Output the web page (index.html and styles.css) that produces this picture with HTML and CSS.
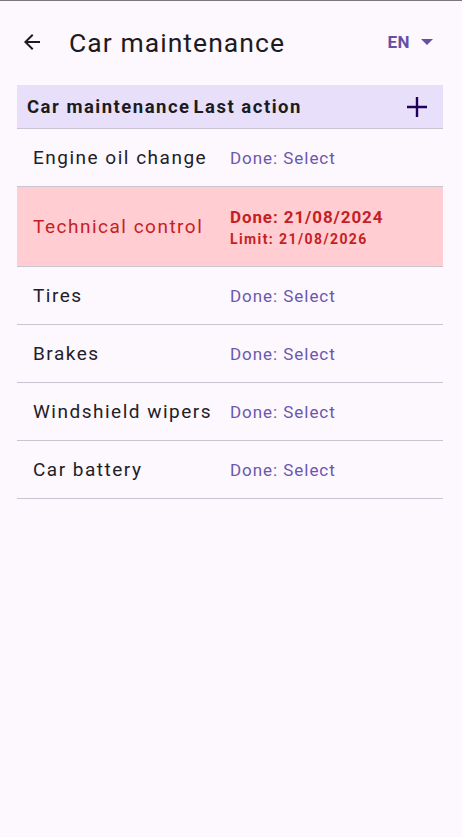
FILE: index.html
```html
<!DOCTYPE html>
<html lang="en">
  <head>
    <meta charset="UTF-8" />
    <meta name="viewport" content="width=device-width, initial-scale=1.0" />
    <title>Car maintenance</title>
    <link rel="stylesheet" href="styles.css">
  </head>
  <body>
    <div class="screen">
      <header class="topbar">
        <button class="back" aria-label="Back">
          <svg width="24" height="24" viewBox="0 0 24 24"><path d="M20 11H7.83l5.59-5.59L12 4l-8 8 8 8 1.41-1.41L7.83 13H20v-2z" fill="#1d1b20"/></svg>
        </button>
        <h1 class="title">Car maintenance</h1>
        <div class="lang">
          <span>EN</span>
          <svg width="14" height="8" viewBox="0 0 14 8"><path d="M1 1h12L7 7z" fill="#6750a4"/></svg>
        </div>
      </header>

      <div class="table">
        <div class="table-head">
          <span class="th th-name">Car maintenance</span>
          <span class="th">Last action</span>
          <button class="add" aria-label="Add">
            <svg width="22" height="22" viewBox="0 0 22 22"><path d="M9.8 1h2.4v8.8H21v2.4h-8.8V21H9.8v-8.8H1V9.8h8.8z" fill="#21005d"/></svg>
          </button>
        </div>

        <div class="row">
          <span class="name">Engine oil change</span>
          <span class="action">Done: Select</span>
        </div>
        <div class="row row-alert">
          <span class="name">Technical control</span>
          <div class="action">
            <div class="done">Done: 21/08/2024</div>
            <div class="limit">Limit: 21/08/2026</div>
          </div>
        </div>
        <div class="row">
          <span class="name">Tires</span>
          <span class="action">Done: Select</span>
        </div>
        <div class="row">
          <span class="name">Brakes</span>
          <span class="action">Done: Select</span>
        </div>
        <div class="row">
          <span class="name">Windshield wipers</span>
          <span class="action">Done: Select</span>
        </div>
        <div class="row">
          <span class="name">Car battery</span>
          <span class="action">Done: Select</span>
        </div>
      </div>
    </div>
  </body>
</html>
```

FILE: styles.css
```css
* {
  box-sizing: border-box;
  font-family: Roboto, "Noto Sans", sans-serif;
}

html,
body {
  margin: 0;
  height: 100%;
  background-color: #fdf7fe;
  color: #1d1b20;
}

.screen {
  min-height: 100%;
  border-top: 1px solid #7a7a7a;
}

button {
  border: none;
  background: none;
  padding: 0;
  cursor: pointer;
}

.topbar {
  display: flex;
  align-items: center;
  height: 82px;
  padding: 0 28px 0 20px;
}

.back {
  display: flex;
  width: 24px;
  height: 24px;
}

.title {
  flex: 1;
  margin: 0 0 0 25px;
  font-size: 26.5px;
  font-weight: 400;
  letter-spacing: 1.05px;
}

.lang {
  display: flex;
  align-items: center;
  gap: 10px;
  color: #6750a4;
  font-size: 17px;
  font-weight: 700;
  letter-spacing: 0.5px;
}

.table {
  margin: 2px 19px 0 17px;
}

.table-head {
  display: flex;
  align-items: center;
  height: 44px;
  padding: 0 15px 0 10px;
  background-color: #e8e0fb;
  border-bottom: 1px solid #cac4d0;
}

.th {
  font-size: 18.5px;
  font-weight: 700;
  letter-spacing: 1.5px;
  color: #1d1b20;
}

.th-name {
  margin-right: 3px;
}

.add {
  display: flex;
  margin-left: auto;
}

.row {
  display: flex;
  align-items: center;
  height: 58px;
  padding-left: 16px;
  border-bottom: 1px solid #cac4d0;
}

.name {
  width: 197px;
  font-size: 19px;
  letter-spacing: 1.5px;
  color: #222027;
}

.action {
  color: #6a58ad;
  font-size: 17px;
  letter-spacing: 0.95px;
}

.row-alert {
  height: 80px;
  background-color: #ffcdd2;
}

.row-alert .name,
.row-alert .action {
  color: #c51f26;
}

.done {
  font-size: 17px;
  font-weight: 700;
  letter-spacing: 0.9px;
}

.limit {
  margin-top: 4px;
  font-size: 14px;
  font-weight: 700;
  letter-spacing: 1.4px;
}
```
